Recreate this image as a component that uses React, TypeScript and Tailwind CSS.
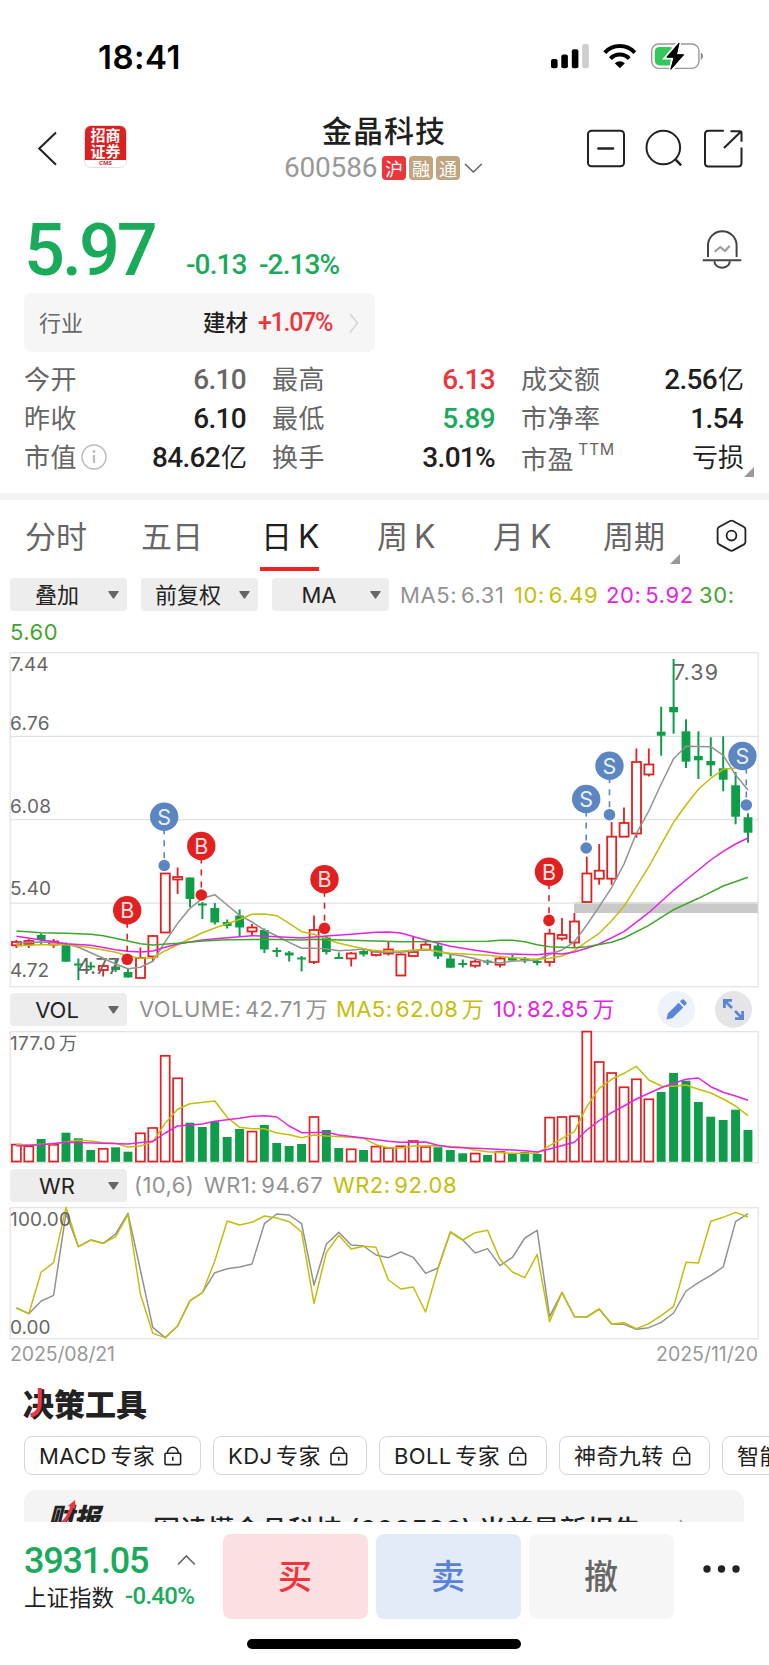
import React from "react";

const CJK = "font-['Noto_Sans_CJK_SC',sans-serif]";
const NUM = "font-[Roboto,'Noto_Sans_CJK_SC',sans-serif]";
const UI = "font-[Inter,'Noto_Sans_CJK_SC',sans-serif]";

const RED = "#e32020";
const GREEN = "#0f9d49";
const GRAY = "#929292";
const YELLOW = "#c3be0c";
const MAGENTA = "#e323e3";
const LEAF = "#3fa62c";
const BLUE = "#5b86c2";

const px = (i: number) => 16.4 + i * 12.4;

type Candle = [string, number, number, number, number];
const candles: Candle[] = [
  ["r", 940, 942, 945.3, 948], ["r", 939, 941, 944, 948], ["g", 933.3, 935, 940, 944], ["r", 939, 941.5, 944.5, 948],
  ["g", 942.5, 945, 961.7, 961.7], ["g", 958.5, 963.5, 965, 980], ["g", 962, 965.5, 967, 970], ["r", 964, 966, 970, 976.5],
  ["g", 960, 966.5, 970, 972], ["g", 969, 972, 977.5, 977.5], ["r", 947.5, 958, 978, 978.5], ["r", 935, 936, 956.5, 961.5],
  ["r", 873, 873.5, 932.5, 932.5], ["r", 867.5, 877, 879.5, 894], ["g", 877.5, 877.5, 899, 907], ["g", 902, 903.5, 905.5, 919],
  ["g", 903, 908, 922.5, 924.5], ["g", 919.5, 922, 926, 928.5], ["g", 909.5, 915.5, 927.5, 936], ["r", 924, 927.5, 931.5, 935.5],
  ["g", 928.5, 930, 949.5, 953], ["g", 947.5, 950, 951.5, 957], ["g", 951, 952.5, 955.5, 961.5], ["g", 956, 957.5, 959, 971.5],
  ["r", 915.5, 930, 962, 964], ["g", 936, 937.5, 952, 954.5], ["g", 952.5, 957, 958.7, 958.7], ["r", 952, 953.5, 958.5, 966.5],
  ["g", 949.5, 951, 954.5, 956.5], ["r", 950, 951.5, 955, 956.5], ["r", 942, 949.5, 953.5, 955.5], ["r", 953.5, 954.5, 975.5, 975.5],
  ["r", 936.7, 952, 956, 956], ["r", 942, 944.7, 949.7, 950.7], ["g", 943, 945.5, 956.5, 959], ["g", 954.5, 958.5, 967.7, 967.7],
  ["g", 959.5, 963, 965, 967.5], ["r", 959.5, 961.7, 965.7, 967.7], ["g", 959.5, 960.7, 962.5, 965], ["r", 956.7, 958.5, 964.7, 967.5],
  ["g", 955, 957.5, 960.5, 961.5], ["g", 957, 958.5, 960, 963], ["g", 958.7, 961, 962.7, 965.3], ["r", 928.7, 933.7, 962, 966.5],
  ["r", 918, 935, 938.5, 940.7], ["r", 913, 921.5, 942.5, 947], ["r", 856.7, 873.5, 902, 902], ["r", 844, 870.7, 878.7, 884.7],
  ["r", 822, 836.7, 878.7, 884.7], ["r", 807.5, 823, 836.7, 836.7], ["r", 748.5, 762, 833.5, 837.7], ["r", 748.5, 764.5, 774.5, 776.5],
  ["g", 706.7, 731.7, 735.7, 755.7], ["g", 659, 707, 712.3, 733.7], ["g", 719.3, 731.3, 761.7, 768], ["g", 731.3, 756, 760.3, 779],
  ["g", 737.3, 761, 765.3, 776.3], ["g", 736.3, 768.3, 779.7, 791.3], ["g", 772, 785.3, 816.7, 824.3], ["g", 813.3, 817.3, 832.7, 842.7],
];

type Pt = [number, number];
const ma5: Pt[] = [[0, 943.3], [1, 942.3], [2, 942], [3, 942.6], [4, 943.7], [5, 947.3], [6, 952.7], [7, 958.3], [8, 964], [9, 968.7], [10, 967.3], [11, 961.3], [12, 941.7], [13, 923.3], [14, 908.3], [15, 898.3], [16, 894.7], [17, 905], [18, 915.3], [19, 922], [20, 930], [21, 936], [22, 942.3], [23, 948.3], [24, 948.3], [25, 948.7], [26, 950.7], [27, 950], [28, 949], [29, 952.3], [31, 952.3], [32, 951], [33, 949.7], [34, 951], [35, 954.3], [36, 956], [37, 958.7], [38, 962], [39, 963], [40, 961], [41, 960.7], [42, 960], [43, 954.3], [44, 950], [45, 941.7], [46, 925], [47, 906.7], [48, 887.7], [49, 864], [50, 833.3], [51, 811], [52, 784], [53, 758.7], [54, 746.3], [56, 746.7], [57, 755.3], [58, 775], [59, 790]];
const ma10: Pt[] = [[0, 945.7], [2, 944.7], [4, 944.7], [5, 946], [6, 947.7], [7, 950], [8, 952.3], [9, 955.7], [10, 958.3], [11, 958], [12, 950.7], [13, 944.7], [14, 938.7], [15, 932.7], [16, 928], [17, 923.7], [18, 919.3], [19, 914.3], [20, 914], [21, 915.7], [22, 923.3], [23, 931.7], [24, 934.3], [25, 939], [26, 943.3], [27, 946], [28, 948.7], [29, 950.7], [31, 951], [33, 949.3], [34, 951.7], [35, 953.3], [38, 955.3], [40, 957.7], [42, 959.3], [43, 958.3], [44, 956], [45, 950.7], [46, 941.7], [47, 933.3], [48, 920.7], [49, 906.3], [50, 886.7], [51, 866.7], [52, 844.3], [53, 822.3], [54, 805], [55, 789.3], [56, 778.3], [57, 769.3], [58, 768]];
const ma20: Pt[] = [[0, 936.3], [2, 940], [4, 943.7], [6, 945.3], [8, 949.7], [9, 951.3], [10, 952], [11, 951], [12, 947.3], [13, 944], [15, 940], [17, 937.7], [19, 935.7], [21, 936.7], [23, 938], [25, 936], [27, 934.3], [29, 932.3], [30, 932], [31, 933], [33, 940], [35, 946.3], [37, 950.3], [39, 953.7], [42, 954.7], [43, 953.3], [44, 954], [45, 952], [46, 948.3], [47, 944], [49, 931.7], [51, 912.7], [53, 890.3], [54, 880], [55, 870], [56, 860], [57, 851.3], [58, 844], [59, 838]];
const ma30: Pt[] = [[0, 931], [2, 932.7], [4, 933.2], [6, 934.3], [7, 935.7], [9, 941], [10, 943.7], [11, 945], [13, 943.3], [15, 941], [17, 939.7], [20, 939.3], [23, 940], [24, 939.3], [27, 940.3], [31, 941.7], [38, 941.3], [39, 940.3], [40, 940.3], [41, 941.7], [42, 944.7], [43, 946.7], [44, 947.3], [45, 947.7], [46, 946.7], [48, 942.3], [49, 938], [51, 925.3], [53, 909.7], [55, 898.3], [57, 886], [59, 877.3]];

const volTops = [1144.3, 1146, 1139, 1144.5, 1132.7, 1138.3, 1150, 1148.5, 1147.3, 1151.7, 1133, 1127.7, 1055.5, 1078, 1122.7, 1127, 1121.3, 1137, 1129, 1131.3, 1125, 1143, 1146, 1144, 1116.7, 1130, 1148, 1149, 1150, 1146.3, 1147.7, 1146, 1140.7, 1146.7, 1147.3, 1150, 1153.3, 1153.3, 1155, 1151.7, 1153.7, 1152, 1154, 1117.3, 1116.7, 1116, 1031.3, 1061.7, 1072.7, 1087, 1079, 1099, 1092, 1073, 1080.7, 1102, 1116.7, 1120, 1109.7, 1130];
const vol5: Pt[] = [[0, 1144.3], [1, 1145], [3, 1143.7], [5, 1140.3], [6, 1141], [7, 1142.7], [8, 1143.3], [9, 1147], [10, 1146], [11, 1141.7], [12, 1123.3], [13, 1109.3], [14, 1103.7], [16, 1101], [17, 1117.3], [18, 1127.3], [19, 1128.7], [20, 1128.7], [21, 1133], [22, 1134.7], [23, 1137.7], [24, 1135], [25, 1136], [27, 1137.3], [28, 1138.3], [29, 1144.7], [30, 1147.7], [31, 1148], [32, 1146], [34, 1145.7], [36, 1147.3], [37, 1150], [38, 1151.7], [40, 1153.3], [42, 1153.3], [43, 1145.7], [45, 1131.7], [46, 1106.7], [47, 1088.3], [48, 1079.3], [49, 1073.3], [50, 1066.3], [51, 1080], [52, 1086], [53, 1086.3], [54, 1085], [55, 1089.3], [56, 1093], [57, 1099], [58, 1106], [59, 1115.7]];
const vol10: Pt[] = [[0, 1146], [2, 1144.7], [4, 1142.3], [7, 1143.3], [9, 1144], [11, 1141.3], [12, 1133], [13, 1126], [15, 1124], [16, 1121.3], [18, 1118.3], [19, 1116.3], [20, 1115.7], [21, 1117], [22, 1126], [23, 1132.7], [25, 1132.3], [26, 1135], [28, 1138], [30, 1141.3], [31, 1142.3], [33, 1142], [34, 1145.3], [35, 1147.3], [38, 1148.7], [41, 1150.7], [42, 1152], [43, 1149], [45, 1142.3], [46, 1130], [47, 1120.7], [48, 1112.7], [49, 1106], [50, 1099], [51, 1093.3], [52, 1087.7], [53, 1083.3], [54, 1079.3], [55, 1078], [56, 1086.7], [57, 1092.3], [58, 1096], [59, 1100.3]];

const wr2 = [984, 1001, 876, 848, 682, 800, 780, 790, 770, 704, 942, 1060, 1073, 1038, 962, 938, 843, 723, 735, 727, 708, 714, 725, 756, 970, 817, 766, 807, 799, 802, 900, 927, 921, 996, 866, 756, 780, 758, 751, 838, 876, 893, 823, 1025, 937, 1010, 1011, 987, 1032, 1028, 1046, 1031, 1007, 979, 847, 849, 724, 712, 697, 711];
const wr1 = [984, 1001, 963, 946, 700, 800, 780, 790, 762, 700, 870, 1042, 1073, 1038, 962, 938, 878, 866, 861, 852, 731, 702, 705, 731, 915, 792, 757, 795, 798, 825, 833, 816, 832, 880, 864, 756, 780, 819, 806, 857, 832, 774, 751, 1010, 937, 1010, 1011, 987, 1032, 1033, 1048, 1043, 1027, 999, 933, 908, 886, 861, 725, 701];
const wrPts = (a: number[]): Pt[] => a.map((v, i) => [i, 980 + v / 3]);

function Line({ pts, color }: { pts: Pt[]; color: string }) {
  return (
    <polyline
      points={pts.map(([i, y]) => `${px(i).toFixed(1)},${y}`).join(" ")}
      fill="none"
      stroke={color}
      strokeWidth="1.5"
      strokeLinejoin="round"
    />
  );
}

function Label({ x, y, w, size = 19, color = "#666", children }: { x: number; y: number; w: number; size?: number; color?: string; children: string }) {
  return (
    <text x={x} y={y} fontSize={size} fill={color} textLength={w} lengthAdjust="spacing" className={UI}>
      {children}
    </text>
  );
}

type Mark = { k: "B" | "S"; x: number; y: number; dx?: number; dy: number };
const marks: Mark[] = [
  { k: "B", x: 127.2, y: 910.3, dy: 959.3 },
  { k: "S", x: 164.2, y: 816.7, dy: 865.5 },
  { k: "B", x: 201.3, y: 846, dy: 895 },
  { k: "B", x: 324.5, y: 879.3, dy: 928.3 },
  { k: "B", x: 549, y: 871.7, dy: 920.4 },
  { k: "S", x: 586.2, y: 799, dy: 848 },
  { k: "S", x: 609.5, y: 765.8, dy: 814.7 },
  { k: "S", x: 742.4, y: 756, dx: 746.3, dy: 805 },
];

function PriceChart() {
  return (
    <svg width="769" height="343" viewBox="0 648 769 343" className="block shrink-0">
      <rect x="574" y="902.3" width="184" height="10.7" fill="#c9c9c9" />
      <g stroke="#e2e2e2" fill="none" strokeWidth="1.2">
        <rect x="10.2" y="652.7" width="748" height="334" />
        <path d="M10 736.3H758M10 819.6H758M10 903.2H758" />
      </g>
      {candles.map(([k, hi, t, b, lo], i) => {
        const x = px(i);
        if (k === "g")
          return (
            <g key={i} fill={GREEN}>
              <rect x={x - 1} y={hi} width="2" height={lo - hi} />
              <rect x={x - 4.4} y={t} width="8.8" height={Math.max(b - t, 2)} />
            </g>
          );
        return (
          <g key={i} stroke={RED} strokeWidth="1.8" fill="none">
            <path d={`M${x} ${hi}V${t}M${x} ${b}V${lo}`} />
            <rect x={x - 4.4} y={t} width="9" height={b - t} />
          </g>
        );
      })}
      <Label x={10} y={671} w={38.5}>7.44</Label>
      <Label x={10} y={730.3} w={39.5}>6.76</Label>
      <Label x={10} y={812.5} w={41}>6.08</Label>
      <Label x={10} y={894.5} w={41}>5.40</Label>
      <Label x={10} y={977} w={39}>4.72</Label>
      <Label x={77} y={973.5} w={43} size={21.5}>4.77</Label>
      <Label x={673} y={679.6} w={45} size={21.5}>7.39</Label>
      <Line pts={ma5} color={GRAY} />
      <Line pts={ma10} color={YELLOW} />
      <Line pts={ma20} color={MAGENTA} />
      <Line pts={ma30} color={LEAF} />
      {marks.map((m, i) => {
        const c = m.k === "B" ? RED : BLUE;
        const dx = m.dx ?? m.x;
        return (
          <g key={i}>
            <path d={`M${dx} ${m.y + 13}V${m.dy - 5}`} stroke={c} strokeWidth="1.6" strokeDasharray="6 6" strokeDashoffset="1.5" />
            <circle cx={m.x} cy={m.y} r="14.2" fill={c} />
            <circle cx={dx} cy={m.dy} r="5.8" fill={c} />
            <text x={m.x} y={m.y + 8} fontSize="21.5" textAnchor="middle" fill="#fff" fillOpacity="0.9" className={UI}>{m.k}</text>
          </g>
        );
      })}
    </svg>
  );
}

function VolumeChart() {
  return (
    <svg width="769" height="138" viewBox="0 1028 769 138" className="block shrink-0">
      <rect x="10.2" y="1031.7" width="748" height="131" stroke="#e2e2e2" fill="none" strokeWidth="1.2" />
      {volTops.map((t, i) =>
        candles[i][0] === "g" ? (
          <rect key={i} x={px(i) - 4.5} y={t} width="8.9" height={1161.8 - t} fill={GREEN} />
        ) : (
          <rect key={i} x={px(i) - 4.5} y={t + 0.3} width="9" height={1161.2 - t} fill="none" stroke={RED} strokeWidth="1.7" />
        ),
      )}
      <Label x={10} y={1050} w={45.5}>177.0</Label>
      <Label x={59} y={1050} w={18} size={18}>万</Label>
      <Line pts={vol5} color={YELLOW} />
      <Line pts={vol10} color={MAGENTA} />
    </svg>
  );
}

function WrChart() {
  return (
    <svg width="769" height="166" viewBox="0 1204 769 166" className="block shrink-0">
      <rect x="10.2" y="1207.7" width="748" height="131" stroke="#e2e2e2" fill="none" strokeWidth="1.2" />
      <Line pts={wrPts(wr1)} color={GRAY} />
      <Line pts={wrPts(wr2)} color={YELLOW} />
      <Label x={10} y={1226} w={61}>100.00</Label>
      <Label x={10} y={1334} w={40.5}>0.00</Label>
      <Label x={10} y={1361} w={105} size={19.5} color="#999">2025/08/21</Label>
      <Label x={656} y={1361} w={102} size={19.5} color="#999">2025/11/20</Label>
    </svg>
  );
}

function Drop({ children, className = "" }: { children: React.ReactNode; className?: string }) {
  return (
    <div className={`flex h-[33px] w-[117px] shrink-0 items-center justify-between rounded-[4px] bg-[#ededed] pr-[8px] text-[22px] leading-none text-[#222] ${UI} ${className}`}>
      <span className="w-[94px] text-center whitespace-nowrap">{children}</span>
      <svg width="11" height="8" viewBox="0 0 11 8" className="shrink-0"><path d="M.8 0h9.4q1 0 .3.9L6.2 7.3q-.7.8-1.4 0L.4.9Q0 0 .8 0z" fill="#666" /></svg>
    </div>
  );
}

function Stat({ label, value, unit, color = "text-[#1f1f1f]" }: { label: React.ReactNode; value: string; unit?: string; color?: string }) {
  return (
    <div className="flex h-[39px] items-center justify-between">
      <span className={`-ml-[1px] flex items-center pb-[4px] text-[26px] leading-none tracking-[0.5px] text-[#666] ${CJK}`}>{label}</span>
      <span className={`flex items-center whitespace-nowrap ${color}`}>
        <span className={`mr-[1px] text-[28px] leading-none font-medium tracking-[-0.7px] ${NUM}`}>{value}</span>
        {unit && <span className={`pb-[3px] text-[26px] leading-none ${CJK}`}>{unit}</span>}
      </span>
    </div>
  );
}

function Pill({ children, w }: { children: string; w: string }) {
  return (
    <div className={`flex h-[39px] shrink-0 items-center rounded-[8px] border border-[#d6d6d6] pl-[15px] text-[22px] leading-none whitespace-nowrap text-[#1f1f1f] ${UI} ${w}`}>
      <span className="-ml-[1px] tracking-[0.4px] [word-spacing:-3px]">{children}</span>
      <svg width="18" height="20" viewBox="0 0 18 20" className="ml-[9px] shrink-0" fill="none" stroke="#222" strokeWidth="1.6">
        <rect x="1" y="7.2" width="15.6" height="11.4" rx="1" />
        <path d="M3.2 7C4 3 6 1.2 8.8 1.2S13.600 3 14.400 7M8.800 10.800v4" />
      </svg>
    </div>
  );
}

function Corner({ className }: { className: string }) {
  return <svg width="10" height="10" viewBox="0 0 10 10" className={className}><path d="M10 0V10H0z" fill="#999" /></svg>;
}

export default function App() {
  return (
    <div className={`flex h-[1665px] w-[769px] flex-col overflow-hidden bg-white ${CJK}`}>
      {/* status bar */}
      <div className="flex h-[112px] shrink-0 items-center pl-[98px]">
        <span className="w-[453px] pt-[3px] text-[33px] leading-none font-semibold tracking-[0.5px] text-black font-[Inter,sans-serif]">18:41</span>
        <svg width="154" height="28" viewBox="551 43 154 28" className="shrink-0">
          <rect x="551" y="60" width="6.6" height="9.3" rx="2" />
          <rect x="561.3" y="55.6" width="6.6" height="13.7" rx="2" />
          <rect x="571.8" y="50.3" width="6.6" height="19" rx="2" />
          <rect x="582.2" y="45" width="6.6" height="24.3" rx="2" fill="#cdcdcd" />
          <g fill="none" stroke="#000" strokeWidth="4">
            <path d="M604.8 53.6a20.5 20.5 0 0 1 30 0" />
            <path d="M610.4 59.6a13 13 0 0 1 18.8 0" />
          </g>
          <path d="M614.8 64.2a7.3 7.3 0 0 1 10 0l-5 5z" />
          <rect x="651.7" y="45" width="47.2" height="24.4" rx="7" fill="none" stroke="#999" strokeWidth="1.4" />
          <rect x="654.8" y="48" width="19" height="18.4" rx="4.4" fill="#34c759" />
          <path d="M701.3 54q2.8 3 0 6.4z" fill="#8a8a8a" stroke="#8a8a8a" strokeWidth="1" />
          <path d="M679.2 43.4L666.4 58.4h7L670.7 71 684 55.6h-7z" fill="#000" stroke="#fff" strokeWidth="4" paintOrder="stroke" />
          <path d="M679.2 44L666.8 58.2h7.6L670.7 70.3 683.6 55.8h-7.5z" fill="#000" stroke="#000" strokeWidth="0.8" strokeLinejoin="round" />
        </svg>
      </div>

      {/* header */}
      <div className="flex h-[96px] shrink-0 pl-[38px]">
        <svg width="19" height="35" viewBox="38 131 19 35" className="mt-[19px]"><path d="M56 132.5L39.3 148.5 56 164.8" fill="none" stroke="#222" strokeWidth="2" /></svg>
        <div className="mt-[13px] ml-[27px] flex h-[43px] w-[43px] flex-col items-center overflow-hidden rounded-[7px] border border-[#e6dede] bg-[linear-gradient(#da2020_83%,#fff_83%)]">
          <div className="h-[16px] text-center text-[15px] leading-[17px] font-bold whitespace-nowrap text-white">招商</div>
          <div className="h-[17px] text-center text-[15px] leading-[17px] font-bold whitespace-nowrap text-white">证券</div>
          <div className="mt-[1px] text-[6px] leading-[7px] font-bold text-[#da2020] font-['Open_Sans',sans-serif]">CMS</div>
        </div>
        <div className="flex w-[514px] flex-col items-center">
          <div className="mt-[1px] text-[30px] leading-[32px] font-medium tracking-[1px] text-[#1f1f1f]">金晶科技</div>
          <div className="mt-[11px] flex items-center pr-[1px]">
            <span className={`w-[98px] text-[28px] leading-[24px] tracking-[-0.2px] text-[#999] ${NUM}`}>600586</span>
            <span className="flex h-[24px] w-[24px] items-center justify-center rounded-[4px] bg-[#eb363c] pb-[1px] text-[18px] leading-none text-white">沪</span>
            <span className="ml-[3px] flex h-[24px] w-[24px] items-center justify-center rounded-[4px] bg-[#c0a580] pb-[1px] text-[18px] leading-none text-white">融</span>
            <span className="ml-[3px] flex h-[24px] w-[24px] items-center justify-center rounded-[4px] bg-[#c0a580] pb-[1px] text-[18px] leading-none text-white">通</span>
            <svg width="19" height="12" viewBox="0 0 19 12" className="ml-[4px]"><path d="M1 2l8.3 8L17.8 2" fill="none" stroke="#666" strokeWidth="1.6" /></svg>
          </div>
        </div>
        <svg width="158" height="40" viewBox="586 129 158 40" className="mt-[17px] -ml-[55px] shrink-0" fill="none" stroke="#222" strokeWidth="2">
          <rect x="588" y="130.8" width="36" height="35.5" rx="3.5" />
          <path d="M598.5 148.5H613" strokeWidth="2.6" strokeLinecap="round" />
          <circle cx="663.3" cy="147.5" r="16.8" />
          <path d="M675.2 159.2L681.2 165.4" strokeWidth="2.4" />
          <path d="M723.8 130.8H708.5q-3.5 0-3.5 3.5V163q0 3.5 3.5 3.5H738q3.5 0 3.5-3.5V147.5M730.5 131.3h9.5q1.5 0 1.5 1.5v9M740.5 132L724 148" />
        </svg>
      </div>

      {/* price */}
      <div className="flex h-[85px] shrink-0 items-start pl-[24px]">
        <span className={`w-[162px] pt-[1px] text-[72px] leading-[84px] font-medium tracking-[-3px] text-[#1aab5a] ${NUM}`}>5.97</span>
        <span className={`mt-[41px] w-[73px] text-[28px] leading-[32px] tracking-[-0.9px] text-[#1aab5a] font-medium ${NUM}`}>-0.13</span>
        <span className={`mt-[41px] w-[443px] text-[28px] leading-[32px] tracking-[-0.9px] text-[#1aab5a] font-medium ${NUM}`}>-2.13%</span>
        <svg width="40" height="41" viewBox="703 230 40 41" className="mt-[22px] shrink-0" fill="none" stroke="#444" strokeWidth="2">
          <path d="M709 257V245.5a14.3 14.3 0 0 1 28.6 0V257M703.7 260.2H742.3M715.3 261.5a7.9 7.4 0 0 0 15.6 0" />
          <path d="M715.7 251.8L721.3 247l4.6 4 4.8-5.2" stroke="#999" />
        </svg>
      </div>

      {/* industry */}
      <div className="ml-[24px] flex h-[59px] w-[351px] shrink-0 items-center rounded-[7px] bg-[#f6f6f6] pl-[15px]">
        <span className="w-[164px] pb-[4px] text-[22px] leading-none text-[#666]">行业</span>
        <span className="w-[55px] pb-[3px] text-[22.5px] leading-none font-medium text-[#1f1f1f]">建材</span>
        <span className={`w-[91px] text-[25px] leading-none font-medium tracking-[-1.3px] text-[#ec353c] ${NUM}`}>+1.07%</span>
        <svg width="10" height="22" viewBox="0 0 10 22"><path d="M1 2l7.5 9L1 20.5" fill="none" stroke="#d5d5d5" strokeWidth="1.6" /></svg>
      </div>

      {/* statistics */}
      <div className="relative grid h-[141px] shrink-0 grid-cols-[222px_223px_222px] content-start gap-x-[26px] px-[25px] pt-[8px]">
        <div>
          <Stat label="今开" value="6.10" color="text-[#666]" />
          <Stat label="昨收" value="6.10" />
          <Stat
            label={<>市值<svg width="26" height="26" viewBox="0 0 26 26" className="mt-[2px] ml-[4px]"><circle cx="13" cy="13" r="12" fill="none" stroke="#bbb" strokeWidth="1.5" /><path d="M13 11v8" stroke="#bbb" strokeWidth="2.2" /><circle cx="13" cy="7.5" r="1.4" fill="#bbb" /></svg></>}
            value="84.62"
            unit="亿"
          />
        </div>
        <div>
          <Stat label="最高" value="6.13" color="text-[#ec353c]" />
          <Stat label="最低" value="5.89" color="text-[#1aab5a]" />
          <Stat label="换手" value="3.01%" />
        </div>
        <div>
          <Stat label="成交额" value="2.56" unit="亿" />
          <Stat label="市净率" value="1.54" />
          <Stat label={<><span className="pt-[4px]">市盈</span><span className={`mb-[14px] ml-[4px] text-[16px] tracking-[0.6px] ${UI}`}>TTM</span></>} value="" unit="亏损" />
        </div>
        <Corner className="absolute top-[115px] left-[744px]" />
      </div>
      <div className="h-[7px] shrink-0 bg-[#f4f4f4]" />

      {/* period tabs */}
      <div className="relative flex h-[78px] shrink-0 pt-[18px] text-[31px] leading-[34px] text-[#666]">
        <span className="ml-[25px] w-[116px]">分时</span>
        <span className="w-[119px]">五日</span>
        <span className="flex w-[117px] flex-col text-[#1f1f1f]">
          <span className="pl-[1px]">日<span className={`ml-[6px] text-[32px] ${UI}`}>K</span></span>
          <span className="mt-[13px] h-[4px] w-[59px] bg-[#ec2225]" />
        </span>
        <span className="w-[116px]">周<span className={`ml-[6px] text-[32px] ${UI}`}>K</span></span>
        <span className="w-[110px]">月<span className={`ml-[6px] text-[32px] ${UI}`}>K</span></span>
        <span className="w-[112px]">周期</span>
        <svg width="32" height="34" viewBox="715 519 32 34" className="mt-[1px]" fill="none" stroke="#222" strokeWidth="1.8">
          <path d="M730 521q1.5-.7 3 0l11 6q1.4.8 1.4 2.4V542q0 1.6-1.4 2.4l-11 6q-1.5.7-3 0l-11-6q-1.4-.8-1.4-2.4V529.400q0-1.6 1.4-2.4z" />
          <circle cx="731.5" cy="535.600" r="4.900" />
        </svg>
        <Corner className="absolute top-[54px] left-[670px]" />
      </div>

      {/* overlay controls */}
      <div className={`flex h-[33px] shrink-0 items-center pl-[10px] text-[22px] ${UI}`}>
        <Drop>叠加</Drop>
        <Drop className="ml-[14px]">前复权</Drop>
        <Drop className="ml-[14px]">MA</Drop>
        <span className="ml-[11px] w-[114px] pt-[1px] whitespace-nowrap tracking-[0.6px] [word-spacing:-3px] text-[#929292]">MA5: 6.31</span>
        <span className="w-[92px] pt-[1px] whitespace-nowrap tracking-[0.6px] [word-spacing:-3px] text-[#c3be0c]">10: 6.49</span>
        <span className="w-[93px] pt-[1px] whitespace-nowrap tracking-[0.6px] [word-spacing:-3px] text-[#e323e3]">20: 5.92</span>
        <span className="pt-[1px] whitespace-nowrap tracking-[0.6px] text-[#3fa62c]">30:</span>
      </div>
      <div className={`h-[37px] shrink-0 pl-[10px] text-[22px] leading-[42px] tracking-[0.5px] text-[#3fa62c] ${UI}`}>5.60</div>

      <PriceChart />
      <div className={`mt-[2px] flex h-[33px] shrink-0 items-center pl-[10px] text-[22px] whitespace-nowrap ${UI}`}>
        <Drop>VOL</Drop>
        <span className="ml-[12px] w-[197px] tracking-[0.4px] [word-spacing:-3px] text-[#929292]">VOLUME: 42.71 万</span>
        <span className="w-[157px] tracking-[0.4px] [word-spacing:-3px] text-[#c3be0c]">MA5: 62.08 万</span>
        <span className="w-[165px] tracking-[0.4px] [word-spacing:-3px] text-[#e323e3]">10: 82.85 万</span>
        <span className="flex h-[37px] w-[37px] shrink-0 items-center justify-center rounded-full bg-[#edf2fb]">
          <svg width="21" height="21" viewBox="0 0 21 21" fill="#5b85d9"><path d="M.5 20.500l1.400-6L12.600 3.800l4.700 4.600L6.600 19zM14 2.500l1.700-1.700q1.300-1 2.500.2l1.900 1.900q1.100 1.200 0 2.400L18.500 7z" /></svg>
        </span>
        <span className="ml-[20px] flex h-[37px] w-[37px] shrink-0 items-center justify-center rounded-full bg-[#e5e5e8]">
          <svg width="21" height="21" viewBox="0 0 21 21" fill="none" stroke="#5b85d9" strokeWidth="2.800"><path d="M1.400 9V1.400H9M2 2l7 7M19.600 12v7.600H12M19 19l-7-7" /></svg>
        </span>
      </div>
      <div className="h-[2px] shrink-0" />
      <VolumeChart />
      <div className={`mt-[3px] flex h-[33px] shrink-0 items-center pl-[10px] text-[22px] whitespace-nowrap ${UI}`}>
        <Drop>WR</Drop>
        <span className="ml-[7px] w-[70px] tracking-[0.4px] text-[#929292]">(10,6)</span>
        <span className="w-[129px] tracking-[0.600px] [word-spacing:-3px] text-[#929292]">WR1: 94.67</span>
        <span className="tracking-[0.500px] [word-spacing:-3px] text-[#c3be0c]">WR2: 92.08</span>
      </div>
      <div className="h-[2px] shrink-0" />
      <WrChart />

      {/* decision tools */}
      <div className="flex h-[66px] shrink-0 items-center pl-[23px]">
        <span className="relative text-[31px] leading-[34px] font-black text-[#222]">
          决策工具
          <svg width="14" height="30" viewBox="0 0 14 30" className="absolute top-[2px] left-[7px]"><path d="M9.800 0V14Q9.800 26 0.500 27.500" fill="none" stroke="#f0363c" strokeWidth="4" /></svg>
        </span>
      </div>
      <div className="flex h-[39px] shrink-0 gap-[12px] overflow-hidden pl-[24px]">
        <Pill w="w-[177px]">MACD 专家</Pill>
        <Pill w="w-[154px]">KDJ 专家</Pill>
        <Pill w="w-[168px]">BOLL 专家</Pill>
        <Pill w="w-[151px]">神奇九转</Pill>
        <Pill w="w-[160px]">智能盯盘</Pill>
      </div>
      <div className="mt-[15px] ml-[24px] flex h-[32px] w-[720px] shrink-0 overflow-hidden rounded-t-[12px] bg-[#f4f4f4] pl-[24px]">
        <span className="relative mt-[11px] w-[105px] text-[26px] leading-[30px] font-black whitespace-nowrap italic text-[#222]">
          财报
          <svg width="16" height="24" viewBox="0 0 16 24" className="absolute top-[-1px] left-[13px]"><path d="M1.500 23Q7 18 11 7" fill="none" stroke="#f0363c" strokeWidth="3.400" /><path d="M14 0l.5 9L7 6z" fill="#f0363c" /></svg>
        </span>
        <span className={`mt-[25px] w-[526px] text-[27px] leading-[32px] font-medium whitespace-nowrap text-[#222] ${UI}`}>图读懂金晶科技 (600586) 当前最新报告</span>
        <svg width="10" height="18" viewBox="0 0 10 18" className="mt-[29px] shrink-0" fill="none" stroke="#999" strokeWidth="1.600"><path d="M1 1l7 8-7 8" /></svg>
      </div>

      {/* trade bar */}
      <div className="flex h-[143px] shrink-0 pt-[12px] pl-[24px]">
        <div className="w-[199px]">
          <div className={`flex h-[46px] items-end text-[36px] leading-[38px] font-medium text-[#1aab5a] ${NUM}`}>
            <span className="w-[153px] tracking-[-1.200px]">3931.05</span>
            <svg width="19" height="12" viewBox="0 0 19 12" className="mb-[14px]"><path d="M1 10.500L9.300 2 17.800 10.500" fill="none" stroke="#666" strokeWidth="1.600" /></svg>
          </div>
          <div className="mt-[3px] flex items-center text-[22.500px] leading-[26px] text-[#1f1f1f]">
            <span className="w-[101px]">上证指数</span>
            <span className={`text-[24px] font-medium tracking-[-0.700px] text-[#1aab5a] ${NUM}`}>-0.40%</span>
          </div>
        </div>
        <div className="flex gap-[8px] text-[34px] leading-none font-medium">
          <div className="flex h-[85px] w-[145px] items-center justify-center rounded-[8px] bg-[#fce0e1] pr-[1px] pb-[3px] text-[#ec353c]">买</div>
          <div className="flex h-[85px] w-[145px] items-center justify-center rounded-[8px] bg-[#e4ebf8] pr-[1px] pb-[3px] text-[#5882d8]">卖</div>
          <div className="flex h-[85px] w-[145px] items-center justify-center rounded-[8px] bg-[#f6f6f6] pr-[1px] pb-[3px] text-[#666]">撤</div>
        </div>
        <svg width="37" height="8" viewBox="0 0 37 8" className="mt-[31px] ml-[29px]" fill="#222"><circle cx="4" cy="4" r="3.700" /><circle cx="18.500" cy="4" r="3.700" /><circle cx="33" cy="4" r="3.700" /></svg>
      </div>
      <div className="mt-[-26px] ml-[247px] h-[10px] w-[274px] shrink-0 rounded-full bg-black" />
    </div>
  );
}
